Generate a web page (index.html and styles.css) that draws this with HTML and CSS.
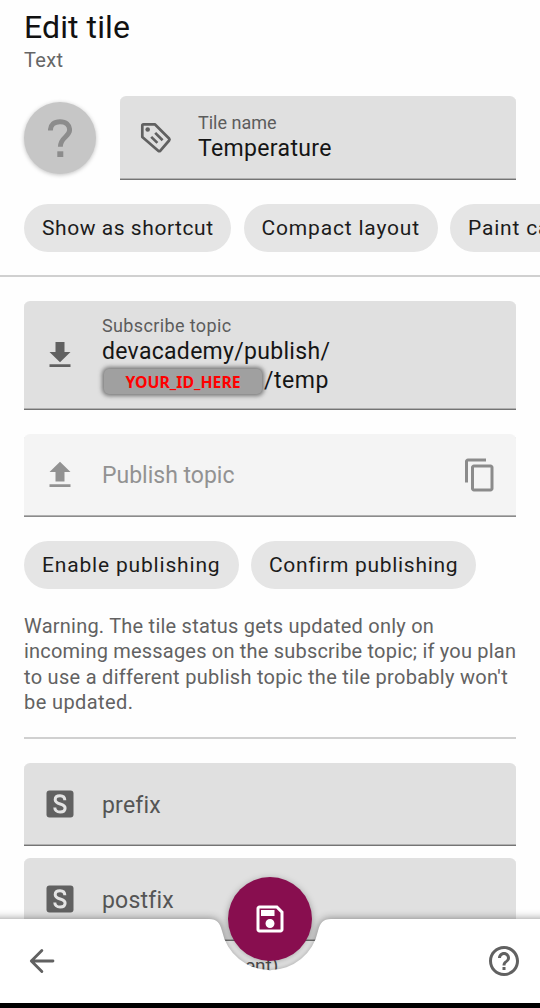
FILE: index.html
```html
<!DOCTYPE html>
<html lang="en">
<head>
<meta charset="utf-8">
<title>Edit tile</title>
<link rel="stylesheet" href="styles.css">
</head>
<body>
<div class="screen">
  <main class="content">
    <header class="header">
      <h1 class="title">Edit tile</h1>
      <p class="subtitle">Text</p>
    </header>
    <section class="name-row">
      <div class="avatar">
        <svg class="avatar-mark" viewBox="0 0 24 38"><path d="M2.4 11.4C2.4 5.8 6.2 2.7 12 2.7s9.6 3.1 9.6 8.3c0 6.8-9.2 7-9.2 16.8" fill="none" stroke="#8c8c8c" stroke-width="4.9"/><path d="M9.3 32.3h6V38h-6z" fill="#8c8c8c"/></svg>
      </div>
      <div class="field">
        <svg class="icon" viewBox="0 0 36 36" fill="none" stroke="#616161" stroke-width="2.7" stroke-linejoin="round"><path d="M4.3 5.5Q4.3 4.3 5.5 4.3H16.8L31.1 18.5Q32 19.5 31.1 20.5L22.4 30.7Q21.3 31.7 20.2 30.7L4.3 16.9z"/><circle cx="9.7" cy="9.5" r="2.3" fill="#616161" stroke="none"/><path d="M17.2 12.9l7.4 7.3M13.2 16.9l6.2 6"/></svg>
        <div class="field-text"><span class="label">Tile name</span><span class="value name-value">Temperature</span></div>
      </div>
    </section>
    <div class="chips">
      <span class="chip shortcut">Show as shortcut</span><span class="chip compact">Compact layout</span><span class="chip paint">Paint ca</span>
    </div>
    <hr class="divider full">
    <div class="field subscribe">
      <svg class="icon" viewBox="0 0 24 24" fill="#616161"><path d="M5 20h14v-1.8H5zM19 10h-4V3.3H9V10H5l7 6.9z"/></svg>
      <div class="field-text"><span class="label topic-label">Subscribe topic</span><span class="value topic-a">devacademy/publish/</span><span class="value topic-b"><span class="redacted">YOUR_ID_HERE</span>/temp</span></div>
    </div>
    <div class="field publish">
      <svg class="icon" viewBox="0 0 24 24" fill="#929292"><path d="M9 16.3h6V10h4l-7-6.9L5 10h4zM5 18.2h14V20H5z"/></svg>
      <span class="hint">Publish topic</span>
      <svg class="icon copy" viewBox="0 0 24 24" fill="#8b8b8b"><path d="M16 1H4c-1.1 0-2 .9-2 2v14h2V3h12V1zm3 4H8c-1.1 0-2 .9-2 2v14c0 1.1.9 2 2 2h11c1.1 0 2-.9 2-2V7c0-1.1-.9-2-2-2zm0 16H8V7h11v14z"/></svg>
    </div>
    <div class="chips second">
      <span class="chip enable">Enable publishing</span><span class="chip confirm">Confirm publishing</span>
    </div>
    <p class="warning"><span class="w1">Warning. The tile status gets updated only on</span><br><span class="w2">incoming messages on the subscribe topic; if you plan</span><br><span class="w3">to use a different publish topic the tile probably won't</span><br><span class="w4">be updated.</span></p>
    <hr class="divider">
    <div class="field prefix">
      <svg class="icon" viewBox="0 0 36 36"><rect x="4.5" y="4.5" width="27" height="27" rx="3" fill="#616161"/><path d="M22.8 14.3c0-2.8-1.8-4.5-4.8-4.5-2.8 0-4.8 1.5-4.8 3.9 0 5.4 9.9 3.1 9.9 8.3 0 2.5-2.1 4-5 4-3.4 0-5.3-1.8-5.3-4.6" fill="none" stroke="#e4e4e4" stroke-width="3"/></svg>
      <span class="hint dark">prefix</span>
    </div>
    <div class="field postfix">
      <svg class="icon" viewBox="0 0 36 36"><rect x="4.5" y="4.5" width="27" height="27" rx="3" fill="#616161"/><path d="M22.8 14.3c0-2.8-1.8-4.5-4.8-4.5-2.8 0-4.8 1.5-4.8 3.9 0 5.4 9.9 3.1 9.9 8.3 0 2.5-2.1 4-5 4-3.4 0-5.3-1.8-5.3-4.6" fill="none" stroke="#e4e4e4" stroke-width="3"/></svg>
      <span class="hint dark">postfix</span>
    </div>
    <p class="helper">ent)</p>
  </main>
  <nav class="bottom-bar">
    <svg class="bar-shape" viewBox="0 0 540 104">
      <path class="bar-path" d="M-20 20H209C217 20 220 24 222 32A49 49 0 0 0 318 32C320 24 323 20 331 20H560V130H-20z"/>
    </svg>
    <svg class="nav-icon back" viewBox="0 0 24 24" fill="none" stroke="#616161" stroke-width="1.9" stroke-linecap="round" stroke-linejoin="round"><path d="M19.3 12H5M11.9 5L4.9 12l7 7"/></svg>
    <button class="fab" aria-label="Save"><svg class="icon" viewBox="0 0 24 24" fill="#fff"><path d="M17 3H5c-1.11 0-2 .9-2 2v14c0 1.1.89 2 2 2h14c1.1 0 2-.9 2-2V7l-4-4zm2 16H5V5h11.17L19 7.83V19zm-7-7c-1.66 0-3 1.34-3 3s1.34 3 3 3 3-1.34 3-3-1.34-3-3-3zM6 6h9v4H6V6z"/></svg></button>
    <svg class="nav-icon" viewBox="0 0 24 24" fill="#616161"><path d="M11 18h2v-2h-2v2zm1-16C6.48 2 2 6.48 2 12s4.48 10 10 10 10-4.48 10-10S17.52 2 12 2zm0 18c-4.41 0-8-3.59-8-8s3.59-8 8-8 8 3.59 8 8-3.59 8-8 8zm0-14c-2.21 0-4 1.79-4 4h2c0-1.1.9-2 2-2s2 .9 2 2c0 2-3 1.75-3 5h2c0-2.25 3-2.5 3-5 0-2.21-1.79-4-4-4z"/></svg>
  </nav>
</div>
</body>
</html>
```
FILE: styles.css
```css
* { box-sizing: border-box; }
body { margin: 0; background: #000; font-family: Roboto, "Liberation Sans", sans-serif; }
.screen { position: relative; height: 1008px; overflow: hidden; border-bottom: 5px solid #000; background: #fefefe; }
.content { padding: 0 24px; }
.header { height: 96px; padding-top: 8px; }
.title { margin: 0; font-size: 32px; line-height: 39px; font-weight: 400; color: #111; letter-spacing: .1px; }
.subtitle { margin: 0; font-size: 20px; line-height: 26px; color: #666; letter-spacing: .3px; }
.name-row { display: grid; grid-template-columns: 72px 1fr; gap: 24px; align-items: center; }
.avatar { display: flex; align-items: center; justify-content: center; height: 72px; border-radius: 50%; background: #c6c6c6; box-shadow: 0 1px 4px rgba(0,0,0,.25); }
.avatar-mark { width: 24px; height: 38px; }
.field { display: flex; align-items: center; gap: 24px; height: 84px; padding: 0 18px; border-radius: 6px 6px 0 0; border-bottom: 1px solid #747474; box-shadow: inset 0 -1px #b0b0b0; background: #e0e0e0; }
.icon { display: block; flex: none; width: 36px; height: 36px; }
.field-text { display: flex; flex-direction: column; white-space: nowrap; }
.label { font-size: 18px; line-height: 22px; color: #5c5c5c; }
.value { font-size: 23px; line-height: 29px; color: #151515; }
.name-value { letter-spacing: .35px; }
.chips { display: flex; gap: 12.5px; margin: 24px -24px 0 0; overflow: hidden; }
.chip { flex: none; height: 47.5px; border-radius: 24px; padding-left: 18px; line-height: 49px; font-size: 21px; white-space: nowrap; background: #e5e5e5; color: #1c1c1c; letter-spacing: .82px; }
.shortcut { width: 207px; letter-spacing: .55px; }
.compact { width: 194px; }
.paint { width: 130px; }
.enable { width: 215px; }
.confirm { width: 225px; letter-spacing: .7px; }
.divider { height: 2px; margin: 0; border: 0; background: #d0d0d0; }
.full { margin: 23.5px -24px 24px; }
.subscribe { height: 108.5px; }
.topic-label { letter-spacing: .37px; }
.topic-a { letter-spacing: .3px; }
.topic-b { letter-spacing: .5px; }
.redacted { display: inline-block; width: 158px; height: 25px; margin: 0 2px; border-radius: 5px; background: #a0a0a0; box-shadow: 0 0 4px 2px #777; color: #f00; font: 700 15.8px/26px "Noto Sans", sans-serif; letter-spacing: 0; text-align: center; }
.publish { height: 83.5px; margin-top: 24px; background: #f4f4f4; border-color: #8b8b8b; }
.hint { padding-top: 2px; font-size: 23px; color: #929292; }
.dark { color: #555; letter-spacing: .2px; }
.copy { margin-left: auto; }
.second { margin-top: 24px; gap: 12px; }
.warning { margin: 25px 0 21.5px; font-size: 20px; line-height: 25.5px; color: #626262; white-space: nowrap; }
.w1 { letter-spacing: .23px; }
.w2 { letter-spacing: .2px; }
.w3 { letter-spacing: .29px; }
.w4 { letter-spacing: .4px; }
.prefix { height: 83px; margin-top: 24px; }
.postfix { height: 83px; margin-top: 12px; }
.helper { margin: 14px 0 0 221px; font-size: 19px; line-height: 22px; color: #555; }
.bottom-bar { position: absolute; inset: 899px 0 0; display: flex; align-items: flex-end; justify-content: space-between; padding: 0 18px 24px 24px; }
.bar-shape { position: absolute; inset: 0; width: 540px; height: 104px; }
.bar-path { fill: #fff; filter: drop-shadow(0 0 4px rgba(0,0,0,.45)); }
.nav-icon { position: relative; width: 36px; height: 36px; }
.fab { position: absolute; left: 228px; top: -22px; display: flex; align-items: center; justify-content: center; width: 84px; height: 84px; padding: 0; border: 0; border-radius: 50%; background: #880e4f; box-shadow: 0 2px 7px rgba(0,0,0,.35); }
```
